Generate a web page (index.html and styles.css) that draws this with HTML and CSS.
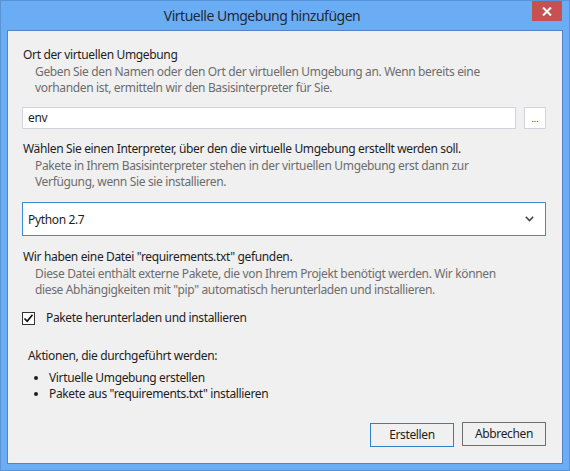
FILE: index.html
```html
<!DOCTYPE html>
<html lang="de">
<head>
<meta charset="utf-8">
<title>Virtuelle Umgebung hinzufügen</title>
<link rel="stylesheet" href="styles.css">
</head>
<body>
<div class="window">
  <div class="titlebar">
    <div class="title">Virtuelle Umgebung hinzufügen</div>
    <div class="close">
      <svg width="10" height="9" viewBox="0 0 10 9"><path d="M1 0.5 L9 8.5 M9 0.5 L1 8.5" stroke="#fff" stroke-width="2"/></svg>
    </div>
  </div>
  <div class="client">
    <div class="label">Ort der virtuellen Umgebung</div>
    <div class="desc">Geben Sie den Namen oder den Ort der virtuellen Umgebung an. Wenn bereits eine<br>vorhanden ist, ermitteln wir den Basisinterpreter für Sie.</div>
    <div class="pathrow">
      <div class="input">env</div>
      <div class="browse">...</div>
    </div>
    <div class="label gap1">Wählen Sie einen Interpreter, über den die virtuelle Umgebung erstellt werden soll.</div>
    <div class="desc">Pakete in Ihrem Basisinterpreter stehen in der virtuellen Umgebung erst dann zur<br>Verfügung, wenn Sie sie installieren.</div>
    <div class="select">
      <span>Python 2.7</span>
      <svg width="9" height="6" viewBox="0 0 9 6"><path d="M0.8 0.8 L4.5 4.5 L8.2 0.8" fill="none" stroke="#444" stroke-width="1.6"/></svg>
    </div>
    <div class="label gap2">Wir haben eine Datei "requirements.txt" gefunden.</div>
    <div class="desc">Diese Datei enthält externe Pakete, die von Ihrem Projekt benötigt werden. Wir können<br>diese Abhängigkeiten mit "pip" automatisch herunterladen und installieren.</div>
    <div class="check">
      <span class="box"><svg width="11" height="11" viewBox="0 0 11 11"><path d="M1.5 5.5 L4.2 8.3 L9.5 1.8" fill="none" stroke="#111" stroke-width="1.7"/></svg></span>
      <span>Pakete herunterladen und installieren</span>
    </div>
    <div class="actions">
      <div class="label">Aktionen, die durchgeführt werden:</div>
      <ul class="list">
        <li>Virtuelle Umgebung erstellen</li>
        <li>Pakete aus "requirements.txt" installieren</li>
      </ul>
    </div>
    <div class="buttons">
      <div class="btn primary">Erstellen</div>
      <div class="btn">Abbrechen</div>
    </div>
  </div>
</div>
</body>
</html>
```

FILE: styles.css
```css
html, body {
  margin: 0;
  padding: 0;
}
body {
  width: 570px;
  height: 471px;
  overflow: hidden;
  font-family: "Noto Sans", "Open Sans", sans-serif;
  font-size: 12px;
  letter-spacing: -0.35px;
  color: #1e1e1e;
}
.window {
  box-sizing: border-box;
  width: 570px;
  height: 471px;
  border: 1px solid #5a94d8;
  background: #6badf5;
  display: flex;
  flex-direction: column;
  padding: 0 6px 6px 6px;
}
.titlebar {
  height: 29px;
  display: flex;
  align-items: flex-start;
  margin: 0 -6px;
  flex: none;
}
.title {
  flex: 1;
  text-align: center;
  font-size: 14px;
  letter-spacing: -0.5px;
  line-height: 30px;
  color: #1f2a38;
  padding-left: 6px;
  padding-right: 15px;
}
.close {
  width: 30px;
  height: 20px;
  margin-right: 7px;
  background: #c75050;
  display: flex;
  align-items: center;
  justify-content: center;
}
.client {
  flex: 1;
  background: #f0f0f0;
  border: 1px solid #5283c4;
  padding: 16px 16px 0 14px;
  display: flex;
  flex-direction: column;
}
.label {
  line-height: 16px;
  padding-left: 1px;
  white-space: nowrap;
}
.desc {
  color: #6d6d6d;
  line-height: 16px;
  padding-left: 13px;
  margin-top: 1px;
  white-space: nowrap;
}
.pathrow {
  display: flex;
  gap: 8px;
  margin-top: 11px;
}
.input {
  flex: 1;
  height: 20px;
  border: 1px solid #d1d3da;
  background: #fff;
  line-height: 20px;
  padding-left: 5px;
}
.browse {
  width: 20px;
  height: 20px;
  border: 1px solid #d1d3da;
  background: #fff;
  text-align: center;
  font-size: 9px;
  letter-spacing: 0;
  line-height: 22px;
  color: #333;
}
.gap1 { margin-top: 12px; }
.gap2 { margin-top: 13px; }
.select {
  margin-top: 12px;
  height: 32px;
  border: 1px solid #3c8cd6;
  background: #fff;
  display: flex;
  align-items: center;
  justify-content: space-between;
  padding: 0 11px 0 5px;
}
.check {
  display: flex;
  align-items: center;
  margin-top: 12px;
  gap: 11px;
  line-height: 16px;
}
.box {
  width: 11px;
  height: 11px;
  border: 1px solid #333;
  background: #fff;
  display: flex;
}
.actions {
  margin-top: 22px;
  padding-left: 5px;
}
.list {
  margin: 6px 0 0 0;
  padding: 0 0 0 22px;
  line-height: 16px;
}
.list li {
  padding-left: 0;
}
.buttons {
  margin-top: auto;
  margin-bottom: 16px;
  display: flex;
  justify-content: flex-end;
  gap: 8px;
}
.btn {
  width: 82px;
  height: 22px;
  border: 1px solid #6f6f6f;
  background: #f0f0f0;
  text-align: center;
  line-height: 22px;
}
.btn.primary {
  border-color: #2f7fcf;
  margin-top: 1px;
}
```
